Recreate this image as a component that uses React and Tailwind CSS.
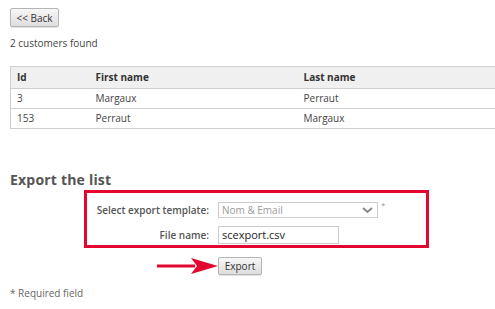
import React from "react";

const rows = [
  { id: "3", first: "Margaux", last: "Perraut" },
  { id: "153", first: "Perraut", last: "Margaux" },
];

const btn =
  "border border-[#b5b5b5] rounded-[2px] bg-gradient-to-b from-[#f7f7f7] to-[#dedede] text-[#333] text-[10px] leading-none shadow-[0_1px_1px_rgba(0,0,0,0.12)]";

const App = () => {
  return (
    <div className="w-[495px] h-[309px] overflow-hidden bg-white font-['Open_Sans',sans-serif] text-[10px] text-[#444] pl-[10px] pt-[8px]">
      {/* Back */}
      <button className={`${btn} w-[49px] h-[19px]`}>&lt;&lt; Back</button>

      <p className="mt-[8px] leading-[16px]">2 customers found</p>

      {/* Results table */}
      <table className="mt-[15px] w-[500px] border-collapse border border-[#cfcfcf] table-fixed">
        <colgroup>
          <col className="w-[79px]" />
          <col className="w-[208px]" />
          <col />
        </colgroup>
        <thead>
          <tr className="bg-[#f0f0f0] h-[22px] text-left text-[10px] font-bold text-[#333]">
            <th className="pl-[6px] font-bold">Id</th>
            <th className="pl-[6px] font-bold">First name</th>
            <th className="pl-[6px] font-bold">Last name</th>
          </tr>
        </thead>
        <tbody>
          {rows.map((r) => (
            <tr key={r.id} className="h-[20px] border-t border-[#cfcfcf]">
              <td className="pl-[6px]">{r.id}</td>
              <td className="pl-[6px]">{r.first}</td>
              <td className="pl-[6px]">{r.last}</td>
            </tr>
          ))}
        </tbody>
      </table>

      {/* Export */}
      <h2 className="mt-[41px] text-[14px] leading-[20px] font-bold text-[#555] tracking-[0.2px]">
        Export the list
      </h2>

      <div className="ml-[74px] w-[345px] h-[58px] border-[3px] border-[#e3062f] pt-[9px]">
        <div className="grid grid-cols-[122px_1fr] gap-x-[9px] gap-y-[8px] items-center">
          <label className="text-right font-semibold text-[#555] leading-none whitespace-nowrap">
            Select export template:
          </label>
          <div className="flex items-start">
            <div className="w-[160px] h-[16px] border border-[#cccccc] flex items-center justify-between pl-[3px] pr-[4px] text-[#9a9a9a]">
              <span>Nom &amp; Email</span>
              <svg width="11" height="7" viewBox="0 0 11 7">
                <path d="M1 1l4.5 4L10 1" fill="none" stroke="#888" strokeWidth="2" />
              </svg>
            </div>
            <span className="ml-[3px] text-[8px] leading-none text-[#999] -mt-[1px]">*</span>
          </div>

          <label className="text-right font-semibold text-[#555] leading-none whitespace-nowrap">
            File name:
          </label>
          <div className="w-[121px] h-[18px] border border-[#cccccc] pl-[3px] flex items-center text-[11px] text-[#222]">
            scexport.csv
          </div>
        </div>
      </div>

      <div className="mt-[9px] ml-[147px] flex items-center">
        <svg width="61" height="18" viewBox="0 0 61 18">
          <path d="M0 9h38" stroke="#e3062f" strokeWidth="3" />
          <path d="M34 1 L61 9 L34 17 L40 9 Z" fill="#e3062f" />
        </svg>
        <button className={`${btn} w-[44px] h-[18px]`}>Export</button>
      </div>

      <p className="mt-[11px] text-[10px] leading-[14px] text-[#666]">* Required field</p>
    </div>
  );
};

export default App;
